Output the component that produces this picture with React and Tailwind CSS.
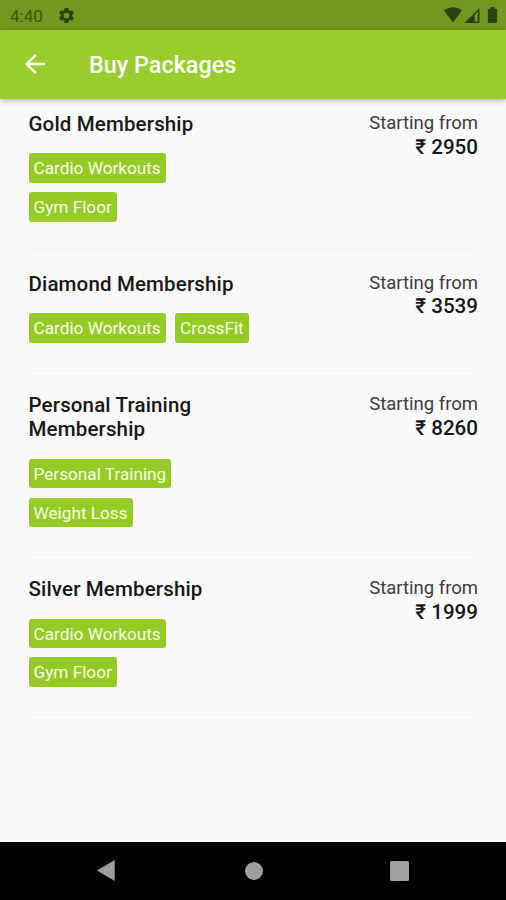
const packages = [
  { name: "Gold Membership", price: 2950, tags: ["Cardio Workouts", "Gym Floor"] },
  { name: "Diamond Membership", price: 3539, tags: ["Cardio Workouts", "CrossFit"] },
  { name: "Personal Training Membership", price: 8260, tags: ["Personal Training", "Weight Loss"] },
  { name: "Silver Membership", price: 1999, tags: ["Cardio Workouts", "Gym Floor"] },
];

function StatusBar() {
  return (
    <div className="flex h-[30px] shrink-0 items-center bg-[#70991f] pl-[10px] pr-[7px] pt-[2px] text-[#2b420d]">
      <span className="w-[46.5px] text-[17px] leading-5 text-[#3b5711]">4:40</span>
      <svg className="-mt-px size-[19px]" viewBox="0 0 24 24" fill="currentColor">
        <path d="M19.14 12.94c.04-.3.06-.61.06-.94s-.02-.64-.07-.94l2.03-1.58a.49.49 0 0 0 .12-.61l-1.92-3.32a.49.49 0 0 0-.59-.22l-2.39.96a7 7 0 0 0-1.62-.94l-.36-2.54a.48.48 0 0 0-.48-.41h-3.84a.47.47 0 0 0-.47.41l-.36 2.54c-.59.24-1.13.57-1.62.94l-2.39-.96a.48.48 0 0 0-.59.22L2.74 8.87a.47.47 0 0 0 .12.61l2.03 1.58a6 6 0 0 0-.02 1.88l-2.03 1.58a.49.49 0 0 0-.12.61l1.92 3.32c.12.22.37.29.59.22l2.39-.96c.5.38 1.03.7 1.62.94l.36 2.54c.05.24.24.41.48.41h3.84c.24 0 .44-.17.47-.41l.36-2.54a7 7 0 0 0 1.62-.94l2.39.96c.22.08.47 0 .59-.22l1.92-3.32a.47.47 0 0 0-.12-.61zM12 15.6a3.6 3.6 0 1 1 0-7.2 3.6 3.6 0 0 1 0 7.2" />
      </svg>
      <svg className="-mt-[2px] ml-auto h-4 w-[55px]" viewBox="0 0 55 16" fill="currentColor">
        <path d="M0 3.8C5-.9 13-.9 18 3.8L9 15.2Z" />
        <path fillRule="evenodd" d="M20.5 16 35.5 1v15ZM30.7 8v6.5h3V4.8Z" />
        <path d="M46.5 0h4v1.8h1.4q1.3 0 1.3 1.3v11.6q0 1.3-1.3 1.3h-6.8q-1.3 0-1.3-1.3V3.1q0-1.3 1.3-1.3h1.4Z" />
      </svg>
    </div>
  );
}

function AppBar() {
  return (
    <header className="z-10 flex h-[68.5px] shrink-0 items-center bg-[#99cd2b] pl-[20px] shadow-[0_2px_5px_rgba(0,0,0,0.28)]">
      <svg className="h-[30px] w-[30px] text-white" viewBox="0 0 24 24" fill="currentColor">
        <path d="M20 11H7.83l5.59-5.59L12 4l-8 8 8 8 1.41-1.41L7.83 13H20z" />
      </svg>
      <h1 className="ml-[39px] pt-[2px] text-[23.4px] font-medium leading-7 text-white">Buy Packages</h1>
    </header>
  );
}

function Tag({ children }) {
  return (
    <span className="h-[29.5px] whitespace-nowrap rounded-[3px] bg-[#94cb27] px-[5px] text-[17.2px] leading-[30px] text-[#f7ffe5]">
      {children}
    </span>
  );
}

function PackageRow({ name, price, tags }) {
  return (
    <li className="flex justify-between border-b border-[#f3f3f3] pb-[27px]">
      <div className="w-[225px]">
        <h2 className="text-[20.5px] font-medium leading-[24.3px] tracking-[0.15px] text-[#171717]">{name}</h2>
        <div className="mt-[17.4px] flex flex-wrap gap-[9.3px]">
          {tags.map((tag) => (
            <Tag key={tag}>{tag}</Tag>
          ))}
        </div>
      </div>
      <div className="flex flex-col items-end">
        <span className="text-[18.5px] leading-[22.8px] text-[#3c3c3c]">Starting from</span>
        <span className="text-[20.6px] font-medium leading-[24.4px] text-[#171717]">₹ {price}</span>
      </div>
    </li>
  );
}

function NavigationBar() {
  return (
    <nav className="flex h-[58.5px] shrink-0 items-center bg-black pl-[97px] text-[#9e9e9e]">
      <svg className="h-[21px] w-[18px]" viewBox="0 0 18 21" fill="currentColor">
        <path d="M0 10.5 17.7 0v21Z" />
      </svg>
      <span className="ml-[129.5px] size-[18.5px] rounded-full bg-[#9e9e9e]" />
      <span className="ml-[126.5px] size-[19.5px] rounded-[1.5px] bg-[#9e9e9e]" />
    </nav>
  );
}

export default function App() {
  return (
    <div className="flex h-[900px] w-[506px] flex-col overflow-hidden bg-[#fafafa] font-['Roboto','Noto_Sans',sans-serif]">
      <StatusBar />
      <AppBar />
      <main className="flex-1 pl-[28.5px] pr-[28px] pt-[13.3px]">
        <ul className="flex flex-col gap-[21.9px]">
          {packages.map((item) => (
            <PackageRow key={item.name} {...item} />
          ))}
        </ul>
      </main>
      <NavigationBar />
    </div>
  );
}
